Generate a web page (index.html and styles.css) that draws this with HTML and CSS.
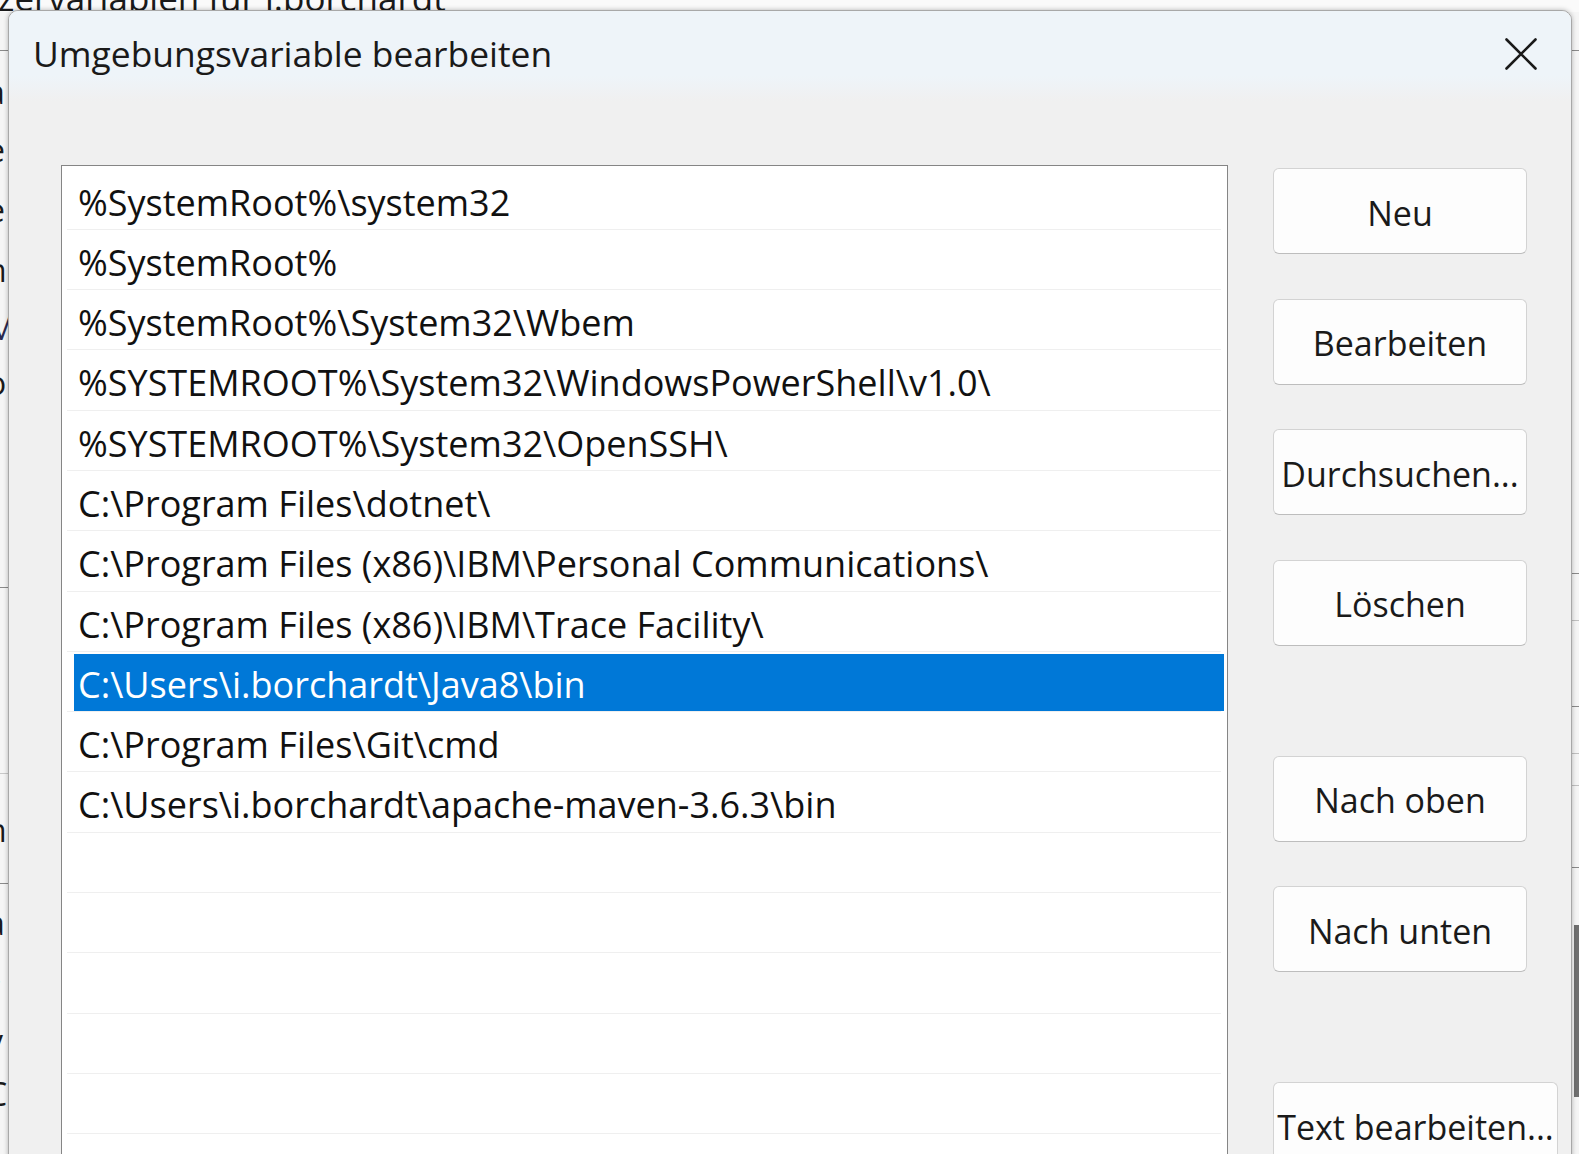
FILE: index.html
```html
<!DOCTYPE html>
<html lang="de">
<head>
<meta charset="utf-8">
<title>Umgebungsvariable bearbeiten</title>
<link rel="stylesheet" href="styles.css">
</head>
<body>
<div class="desktop">
  <div class="parent">
    <div class="parent-top"><span>zervariablen für i.borchardt</span></div>
    <div class="parent-main">
      <div class="pl">
        <div class="pline l1"></div>
        <div class="frag a1">a</div>
        <div class="frag a2">e</div>
        <div class="frag a3">e</div>
        <div class="frag a4">n</div>
        <div class="frag a5">M</div>
        <div class="frag a6">o</div>
        <div class="pline l2"></div>
        <div class="pline l3"></div>
        <div class="frag a7">n</div>
        <div class="pline l4"></div>
        <div class="frag a8">a</div>
        <div class="frag a9">r</div>
        <div class="frag a10">v</div>
        <div class="frag a11">C</div>
      </div>
      <div class="pr">
        <div class="pline r1"></div>
        <div class="pline r2"></div>
        <div class="pline r3"></div>
        <div class="pline r4"></div>
        <div class="pline r5"></div>
        <div class="pline r6"></div>
        <div class="pline r7"></div>
        <div class="scroll"></div>
      </div>
    </div>
  </div>

  <div class="dialog">
    <div class="titlebar">
      <div class="title">Umgebungsvariable bearbeiten</div>
      <div class="close">
        <svg width="32" height="32" viewBox="0 0 32 32"><path d="M1.5 1.5 L30.5 30.5 M30.5 1.5 L1.5 30.5" stroke="#1a1a1a" stroke-width="2.6" stroke-linecap="round" fill="none"/></svg>
      </div>
    </div>
    <div class="body">
      <div class="list">
        <div class="row"><div class="item">%SystemRoot%\system32</div></div>
        <div class="row"><div class="item">%SystemRoot%</div></div>
        <div class="row"><div class="item">%SystemRoot%\System32\Wbem</div></div>
        <div class="row"><div class="item">%SYSTEMROOT%\System32\WindowsPowerShell\v1.0\</div></div>
        <div class="row"><div class="item">%SYSTEMROOT%\System32\OpenSSH\</div></div>
        <div class="row"><div class="item">C:\Program Files\dotnet\</div></div>
        <div class="row"><div class="item">C:\Program Files (x86)\IBM\Personal Communications\</div></div>
        <div class="row"><div class="item">C:\Program Files (x86)\IBM\Trace Facility\</div></div>
        <div class="row"><div class="item sel">C:\Users\i.borchardt\Java8\bin</div></div>
        <div class="row"><div class="item">C:\Program Files\Git\cmd</div></div>
        <div class="row"><div class="item">C:\Users\i.borchardt\apache-maven-3.6.3\bin</div></div>
        <div class="row"><div class="item"></div></div>
        <div class="row"><div class="item"></div></div>
        <div class="row"><div class="item"></div></div>
        <div class="row"><div class="item"></div></div>
        <div class="row"><div class="item"></div></div>
        <div class="row"><div class="item"></div></div>
      </div>
      <div class="buttons">
        <div class="btn">Neu</div>
        <div class="btn">Bearbeiten</div>
        <div class="btn">Durchsuchen...</div>
        <div class="btn">Löschen</div>
        <div class="btn sep">Nach oben</div>
        <div class="btn">Nach unten</div>
        <div class="btn sep wide">Text bearbeiten...</div>
      </div>
    </div>
  </div>
</div>
</body>
</html>
```

FILE: styles.css
```css
* { box-sizing: border-box; }
html, body { margin: 0; height: 100%; }
body {
  background: #f4f4f4;
  font-family: "Open Sans", "Noto Sans", sans-serif;
  overflow: hidden;
}
.desktop {
  position: relative;
  width: 1579px;
  height: 1154px;
  overflow: hidden;
}

/* parent window behind the dialog */
.parent {
  display: flex;
  flex-direction: column;
  height: 100%;
  background: #f5f5f5;
  color: #1a1a1a;
}
.parent-top {
  height: 12px;
  flex: none;
  overflow: hidden;
  font-size: 35px;
  line-height: 40px;
  white-space: nowrap;
  background: #fafafa;
}
.parent-top span { display: block; margin-top: -22px; margin-left: -2px; }
.parent-main { flex: 1; display: flex; justify-content: space-between; }
.pl { width: 9px; overflow: hidden; display: flex; flex-direction: column; }
.pr { width: 8px; display: flex; flex-direction: column; align-items: flex-end; }
.pline { height: 1px; width: 100%; background: #8a8a8a; flex: none; }
.frag {
  height: 30px; line-height: 30px; font-size: 32px;
  margin-left: -13px; flex: none; white-space: nowrap;
}
.l1 { margin-top: 38px; }
.a1 { margin-top: 26px; }
.a2 { margin-top: 28px; }
.a3 { margin-top: 30px; }
.a4 { margin-top: 30px; }
.a5 { margin-top: 28px; color: #2a2a50; }
.a6 { margin-top: 25px; }
.l2 { margin-top: 189px; }
.l3 { margin-top: 185px; background: #c8c8c8; }
.a7 { margin-top: 41px; }
.l4 { margin-top: 38px; }
.a8 { margin-top: 24px; }
.a9 { margin-top: 34px; color: #1c2a6a; }
.a10 { margin-top: 24px; }
.a11 { margin-top: 23px; }
.r1 { margin-top: 38px; }
.r2 { margin-top: 522px; }
.r3 { margin-top: 46px; background: #c0c0c0; }
.r4 { margin-top: 85px; }
.r5 { margin-top: 46px; background: #c0c0c0; }
.r6 { margin-top: 31px; background: #c0c0c0; }
.r7 { margin-top: 81px; }
.scroll { width: 5px; height: 172px; margin-top: 57px; background: #6f6f6f; flex: none; }

/* dialog */
.dialog {
  position: absolute;
  left: 8px;
  top: 10px;
  width: 1564px;
  height: 1200px;
  border: 1px solid #a8a8a8;
  border-radius: 10px 10px 0 0;
  background: #f0f0f0;
  box-shadow: 0 0 5px rgba(0, 0, 0, 0.28);
  display: flex;
  flex-direction: column;
  overflow: hidden;
}
.titlebar {
  height: 90px;
  flex: none;
  display: flex;
  align-items: flex-start;
  padding-left: 24px;
  background: linear-gradient(#eef4f9 0, #eef4f9 72%, #f0f0f0 100%);
}
.title {
  margin-top: 19px;
  font-size: 35.4px;
  line-height: 46px;
  color: #1a1a1a;
  white-space: nowrap;
}
.close {
  margin-left: auto;
  margin-right: 34px;
  margin-top: 27px;
  width: 32px;
  height: 32px;
}
.close svg { display: block; }

.body {
  display: flex;
  align-items: flex-start;
  gap: 45px;
  padding: 64px 0 0 52px;
}
.list {
  width: 1167px;
  height: 1100px;
  flex: none;
  border: 1px solid #858585;
  background: #fff;
  padding-top: 3.5px;
}
.row {
  height: 60.3px;
  margin: 0 6px 0 5px;
  padding-top: 2px;
  border-bottom: 1px solid #efefef;
}
.item {
  height: 57.3px;
  margin: 0 -3px 0 7px;
  padding: 4px 0 0 4px;
  font-size: 36px;
  line-height: 54px;
  white-space: nowrap;
  color: #111;
}
.item.sel { background: #0078d7; color: #fff; }

.buttons {
  display: flex;
  flex-direction: column;
  margin-top: 3px;
}
.btn {
  width: 254px;
  height: 86px;
  flex: none;
  display: flex;
  align-items: center;
  justify-content: center;
  padding-top: 3px;
  background: #fdfdfd;
  border: 1px solid #d3d3d3;
  border-bottom-color: #bdbdbd;
  border-radius: 6px;
  font-size: 34px;
  color: #1a1a1a;
  white-space: nowrap;
}
.btn + .btn { margin-top: 44.5px; }
.btn.sep { margin-top: 110px; }
.btn.wide { width: 285px; }
```
